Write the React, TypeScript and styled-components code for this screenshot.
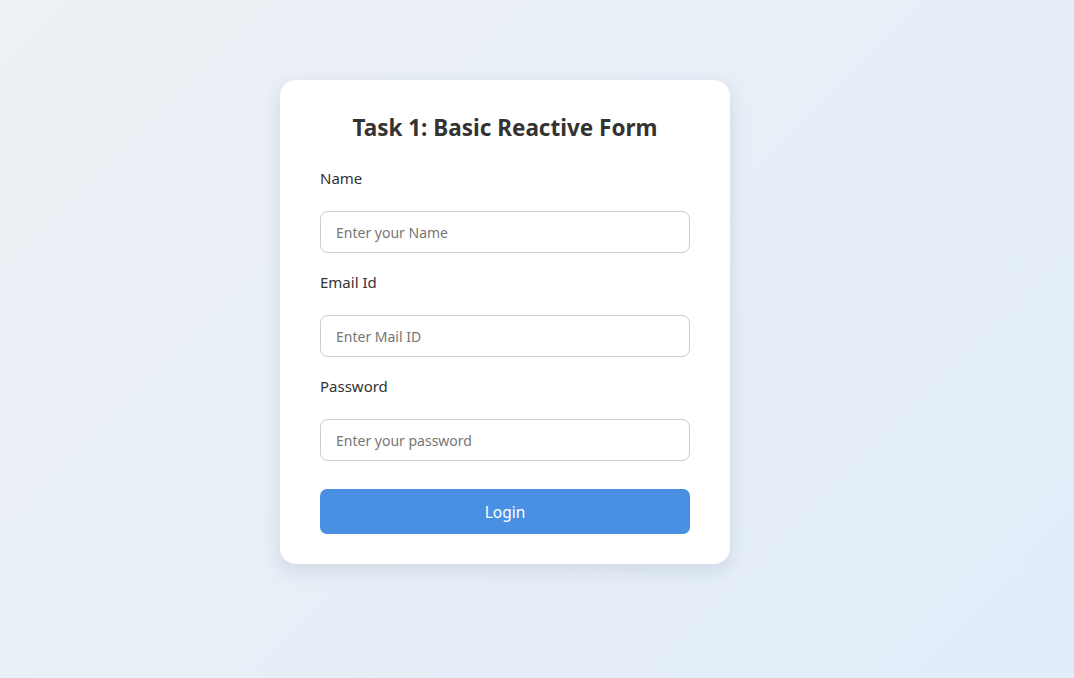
import React from "react";
import styled, { createGlobalStyle } from "styled-components";

const Global = createGlobalStyle`
  html, body { margin: 0; padding: 0; }
  body {
    font-family: "Noto Sans", "Open Sans", sans-serif;
    min-height: 678px;
    background: linear-gradient(135deg, #edf0f4 0%, #e1edfa 100%);
  }
  * { box-sizing: border-box; }
`;

const Page = styled.div`
  display: flex;
  justify-content: center;
  padding-top: 80px;
  padding-right: 64px;
  height: 678px;
`;

const Card = styled.form`
  width: 450px;
  height: 484px;
  background: #fff;
  border-radius: 16px;
  box-shadow: 0 6px 18px rgba(40, 60, 90, 0.12);
  padding: 32px 40px 30px;
  display: flex;
  flex-direction: column;
`;

const Title = styled.h2`
  margin: 0 0 23px;
  font-size: 22.5px;
  line-height: 32px;
  font-weight: 700;
  color: #333;
  text-align: center;
`;

const Group = styled.div`
  display: flex;
  flex-direction: column;
  gap: 22px;
  margin-bottom: 18px;
`;

const Label = styled.label`
  font-size: 15px;
  line-height: 22px;
  color: #333;
`;

const Input = styled.input`
  height: 42px;
  width: 100%;
  border: 1px solid #ccc;
  border-radius: 8px;
  padding: 0 15px;
  font-family: inherit;
  font-size: 14px;
  color: #333;
  outline: none;
  &::placeholder { color: #767676; }
`;

const Button = styled.button`
  margin-top: 10px;
  height: 45px;
  width: 100%;
  border: none;
  border-radius: 7px;
  background: #4a90e2;
  color: #fff;
  font-family: inherit;
  font-size: 15.5px;
  cursor: pointer;
`;

const fields = [
  { id: "name", label: "Name", placeholder: "Enter your Name", type: "text" },
  { id: "email", label: "Email Id", placeholder: "Enter Mail ID", type: "email" },
  { id: "password", label: "Password", placeholder: "Enter your password", type: "password" },
];

export default function App() {
  return (
    <>
      <Global />
      <Page>
        <Card onSubmit={(e) => e.preventDefault()}>
          <Title>Task 1: Basic Reactive Form</Title>
          {fields.map((f) => (
            <Group key={f.id}>
              <Label htmlFor={f.id}>{f.label}</Label>
              <Input id={f.id} type={f.type} placeholder={f.placeholder} />
            </Group>
          ))}
          <Button type="submit">Login</Button>
        </Card>
      </Page>
    </>
  );
}
